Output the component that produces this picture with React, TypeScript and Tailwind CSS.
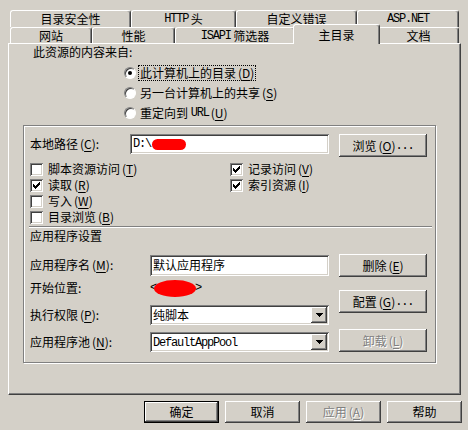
import type { ReactNode } from "react"

const raised =
  "bg-[#d4d0c8] shadow-[inset_-1px_-1px_#404040,inset_1px_1px_#fff,inset_-2px_-2px_#808080,inset_2px_2px_#d4d0c8]"
const sunken =
  "bg-white shadow-[inset_1px_1px_#808080,inset_-1px_-1px_#fff,inset_2px_2px_#404040,inset_-2px_-2px_#d4d0c8]"
const mono = "font-['Liberation_Mono',monospace] text-[12px] tracking-[-1.2px]"
const disabled = "text-[#808080] [text-shadow:1px_1px_0_#fff]"

function Key({ k }: { k: string }) {
  return (
    <span className="ml-[2px]">
      (<span className="underline underline-offset-2">{k}</span>)
    </span>
  )
}

function Tab({ className, children }: { className: string; children: ReactNode }) {
  return (
    <div
      className={`flex items-center justify-center border-l border-t border-r border-white border-r-[#404040] rounded-t-[3px] shadow-[inset_-1px_0_#808080] ${className}`}
    >
      {children}
    </div>
  )
}

function Button({ className, children }: { className: string; children: ReactNode }) {
  return <div className={`${raised} flex items-center justify-center ${className}`}>{children}</div>
}

function Radio({ checked, focus, children }: { checked?: boolean; focus?: boolean; children: ReactNode }) {
  return (
    <div className="h-[20px] flex items-center">
      <div className="w-[12px] h-[12px] rounded-full bg-white border border-t-[#808080] border-l-[#808080] border-r-white border-b-white shadow-[inset_1px_1px_#404040] flex items-center justify-center">
        {checked && <div className="w-[4px] h-[4px] rounded-full bg-black" />}
      </div>
      <div
        className={`ml-[2px] h-[16px] px-[1px] flex items-center border border-dotted ${focus ? "border-black" : "border-transparent"}`}
      >
        {children}
      </div>
    </div>
  )
}

function Check({ checked, children }: { checked?: boolean; children: ReactNode }) {
  return (
    <div className="h-[16px] flex items-center">
      <div className={`${sunken} w-[13px] h-[13px]`}>
        {checked && (
          <svg width="13" height="13" viewBox="0 0 13 13" shapeRendering="crispEdges">
            <path
              d="M3 5h1v3H3z M4 6h1v3H4z M5 7h1v3H5z M6 6h1v3H6z M7 5h1v3H7z M8 4h1v3H8z M9 3h1v3H9z"
              fill="#000"
            />
          </svg>
        )}
      </div>
      <div className="ml-[5px]">{children}</div>
    </div>
  )
}

function Select({ children }: { children: ReactNode }) {
  return (
    <div className={`${sunken} w-[179px] h-[20px] flex items-center pl-[3px] pr-[2px]`}>
      <div className="flex-1">{children}</div>
      <div className={`${raised} w-[16px] h-[16px] flex items-center justify-center`}>
        <svg width="7" height="4" viewBox="0 0 7 4" shapeRendering="crispEdges">
          <path d="M0 0h7v1h-1v1h-1v1h-1v1h-1v-1h-1v-1h-1v-1h-1z" fill="#000" />
        </svg>
      </div>
    </div>
  )
}

export default function App() {
  return (
    <div className="w-[468px] h-[430px] bg-[#d4d0c8] text-black text-[12px] leading-none font-['Noto_Sans_CJK_SC',sans-serif] pt-[10px] overflow-hidden select-none">
      {/* back row of tabs */}
      <div className="flex h-[17px] pl-[10px]">
        <Tab className="w-[121px] h-[17px]">目录安全性</Tab>
        <Tab className="w-[105px] h-[17px]">
          <span className={mono}>HTTP</span>&nbsp;头
        </Tab>
        <Tab className="w-[121px] h-[17px]">自定义错误</Tab>
        <Tab className="w-[102px] h-[17px]">
          <span className={mono}>ASP.NET</span>
        </Tab>
      </div>

      {/* front row of tabs */}
      <div className="flex h-[16px] pl-[10px]">
        <Tab className="w-[82px] h-[16px]">网站</Tab>
        <Tab className="w-[83px] h-[16px]">性能</Tab>
        <Tab className="w-[120px] h-[16px]">
          <span className={mono}>ISAPI</span>&nbsp;筛选器
        </Tab>
        <Tab className="relative z-10 -mx-[2px] -mt-[3px] w-[87px] h-[20px] bg-[#d4d0c8]">主目录</Tab>
        <Tab className="w-[81px] h-[16px]">文档</Tab>
      </div>

      {/* tab page */}
      <div className="ml-[8px] w-[453px] h-[352px] border border-white border-r-[#404040] border-b-[#404040] shadow-[inset_-1px_-1px_#808080]">
        <div className="ml-[24px] h-[16px] flex items-center">此资源的内容来自:</div>

        <div className="ml-[115px] mt-[3px] flex flex-col">
          <Radio checked focus>
            此计算机上的目录
            <Key k="D" />
          </Radio>
          <Radio>
            另一台计算机上的共享
            <Key k="S" />
          </Radio>
          <Radio>
            重定向到&nbsp;<span className={mono}>URL</span>
            <Key k="U" />
          </Radio>
        </div>

        {/* group box */}
        <div className="ml-[14px] mt-[2px] w-[413px] h-[238px] border border-[#808080] shadow-[inset_1px_1px_#fff,1px_1px_#fff]">
          <div className="mt-[8px] ml-[6px] flex items-start">
            <div className="w-[100px] h-[20px] flex items-center">
              本地路径
              <Key k="C" />:
            </div>
            <div className={`${sunken} w-[199px] h-[20px] flex items-center pl-[3px]`}>
              <span className={mono}>D:\</span>
              <div className="ml-[1px] w-[34px] h-[11px] rounded-full bg-[#ff0000]" />
            </div>
            <Button className="ml-[10px] w-[88px] h-[23px]">
              浏览
              <Key k="O" />
              <span className={mono}>...</span>
            </Button>
          </div>

          <div className="mt-[4px] ml-[6px] flex">
            <div className="w-[200px] flex flex-col">
              <Check>
                脚本资源访问
                <Key k="T" />
              </Check>
              <Check checked>
                读取
                <Key k="R" />
              </Check>
              <Check>
                写入
                <Key k="W" />
              </Check>
              <Check>
                目录浏览
                <Key k="B" />
              </Check>
            </div>
            <div className="flex flex-col">
              <Check checked>
                记录访问
                <Key k="V" />
              </Check>
              <Check checked>
                索引资源
                <Key k="I" />
              </Check>
            </div>
          </div>

          <div className="mt-[1px] ml-[5px] w-[403px] border-t border-b border-t-[#808080] border-b-white" />

          <div className="ml-[6px] h-[16px] flex items-center">应用程序设置</div>

          <div className="mt-[10px] ml-[6px] flex">
            <div className="flex flex-col">
              <div className="h-[22px] flex items-center">
                <div className="w-[120px]">
                  应用程序名
                  <Key k="M" />:
                </div>
                <div className={`${sunken} w-[179px] h-[21px] flex items-center pl-[3px]`}>默认应用程序</div>
              </div>
              <div className="h-[24px] flex items-center">
                <div className="w-[120px]">开始位置:</div>
                <span className={mono}>&lt;</span>
                <div className="-ml-[2px] w-[42px] h-[17px] rounded-[50%] bg-[#ff0000]" />
                <span className={`-ml-[1px] ${mono}`}>&gt;</span>
              </div>
              <div className="h-[30px] flex items-center">
                <div className="w-[120px]">
                  执行权限
                  <Key k="P" />:
                </div>
                <Select>纯脚本</Select>
              </div>
              <div className="h-[24px] flex items-center">
                <div className="w-[120px]">
                  应用程序池
                  <Key k="N" />:
                </div>
                <Select>
                  <span className={mono}>DefaultAppPool</span>
                </Select>
              </div>
            </div>
            <div className="ml-[10px] flex flex-col">
              <Button className="w-[88px] h-[23px]">
                删除
                <Key k="E" />
              </Button>
              <Button className="mt-[13px] w-[88px] h-[23px]">
                配置
                <Key k="G" />
                <span className={mono}>...</span>
              </Button>
              <Button className={`mt-[16px] w-[88px] h-[23px] ${disabled}`}>
                卸载
                <Key k="L" />
              </Button>
            </div>
          </div>
        </div>
      </div>

      {/* dialog buttons */}
      <div className="mt-[6px] pr-[6px] flex justify-end gap-[6px]">
        <div className="w-[75px] h-[22px] border border-black">
          <Button className="w-full h-full">确定</Button>
        </div>
        <Button className="w-[75px] h-[22px]">取消</Button>
        <Button className={`w-[75px] h-[22px] ${disabled}`}>
          应用
          <Key k="A" />
        </Button>
        <Button className="w-[75px] h-[22px]">帮助</Button>
      </div>
    </div>
  )
}
